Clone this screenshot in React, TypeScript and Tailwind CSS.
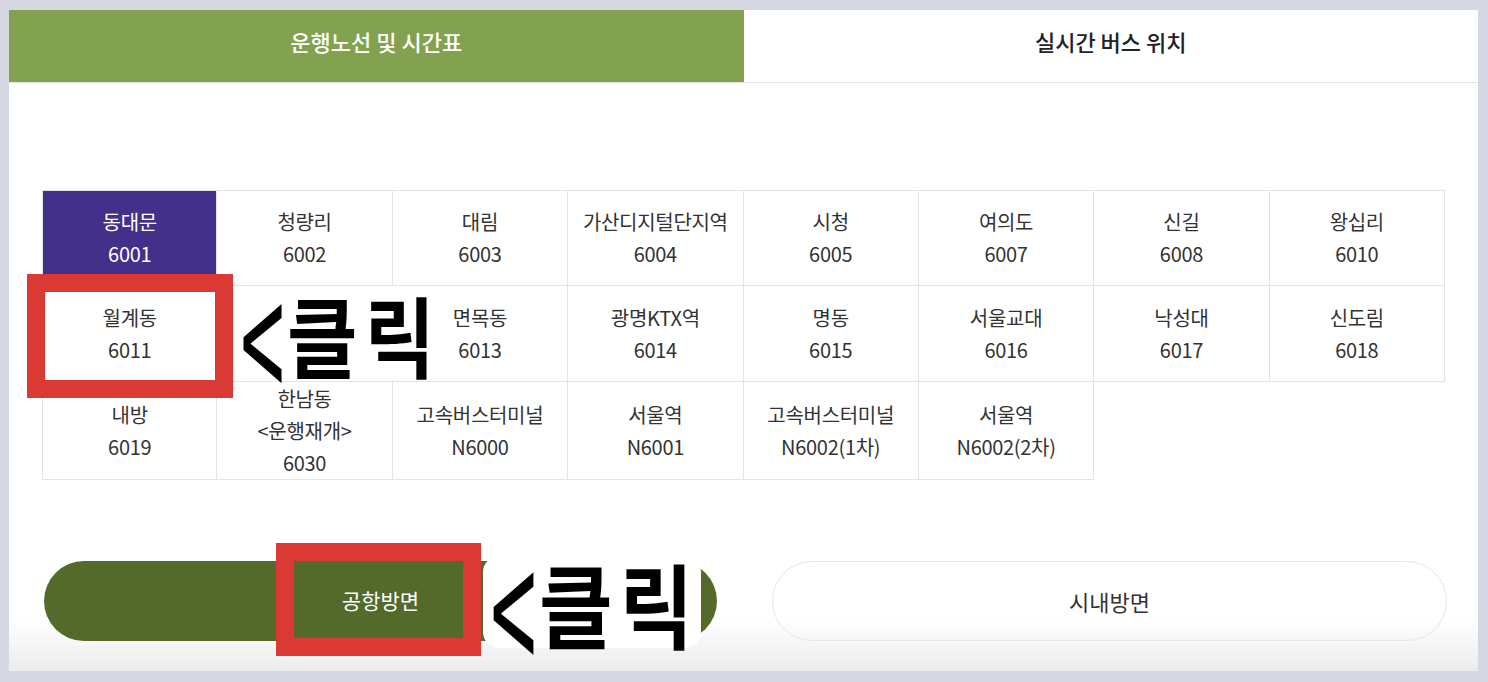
import React from "react";

const cells: string[][] = [
  ["동대문", "6001"],
  ["청량리", "6002"],
  ["대림", "6003"],
  ["가산디지털단지역", "6004"],
  ["시청", "6005"],
  ["여의도", "6007"],
  ["신길", "6008"],
  ["왕십리", "6010"],
  ["월계동", "6011"],
  ["", ""],
  ["면목동", "6013"],
  ["광명KTX역", "6014"],
  ["명동", "6015"],
  ["서울교대", "6016"],
  ["낙성대", "6017"],
  ["신도림", "6018"],
  ["내방", "6019"],
  ["한남동", "<운행재개>", "6030"],
  ["고속버스터미널", "N6000"],
  ["서울역", "N6001"],
  ["고속버스터미널", "N6002(1차)"],
  ["서울역", "N6002(2차)"],
];

function Click({ big }: { big?: boolean }) {
  return (
    <div
      className={
        "flex items-center font-bold text-black leading-none whitespace-nowrap " +
        (big ? "text-[92px]" : "text-[88px]")
      }
      style={{ fontFamily: '"Noto Sans CJK KR", "Noto Sans", sans-serif' }}
    >
      <span className="inline-block shrink-0 scale-y-[2.0] scale-x-[0.9] font-normal">&lt;</span>
      <span className="inline-block shrink-0 ml-[0px] scale-x-[0.87] origin-left tracking-[8px]">
        클릭
      </span>
    </div>
  );
}

export default function App() {
  return (
    <div
      className="relative w-[1488px] h-[682px] bg-[#d5d8e3] pt-[10px] pl-[9px] overflow-hidden"
      style={{ fontFamily: '"Noto Sans CJK KR", "Noto Sans", sans-serif' }}
    >
      <div className="w-[1469px] h-[661px] flex flex-col bg-linear-to-b from-white from-92% to-[#ececec]">
        {/* Tabs */}
        <div className="flex h-[73px] border-b border-[#e6e6e6]">
          <div className="flex-1 bg-[#82a24f] flex items-center justify-center pb-[10px] text-white text-[22px] font-medium">
            운행노선 및 시간표
          </div>
          <div className="flex-1 bg-white flex items-center justify-center pb-[10px] text-[#222] text-[22px] font-medium">
            실시간 버스 위치
          </div>
        </div>

        {/* Grid */}
        <div className="mt-[107px] ml-[33px] w-[1403px] grid grid-cols-8 grid-rows-[96px_96px_98px]">
          {cells.map((c, i) => {
            const col = i % 8;
            const row = Math.floor(i / 8);
            const active = i === 0;
            return (
              <div
                key={i}
                className={
                  "flex flex-col items-center justify-center text-[20px] leading-[32px] tracking-[-0.3px] border-r border-b border-[#e4e4e4] " +
                  (col === 0 ? "border-l " : "") +
                  (row === 0 ? "border-t " : "") +
                  (active ? "bg-[#42308a] text-white" : "bg-white text-[#333]")
                }
              >
                {c.map((t, j) => (
                  <span key={j}>{t}</span>
                ))}
              </div>
            );
          })}
        </div>

        {/* Buttons */}
        <div className="mt-[81px] pl-[35px] pr-[31px] flex gap-[55px]">
          <div className="flex-1 h-[80px] rounded-full bg-[#536a2b] flex items-center justify-center text-white text-[21px]">
            공항방면
          </div>
          <div className="flex-1 h-[80px] rounded-full border border-[#e6e6e6] flex items-center justify-center text-[#333] text-[22px]">
            시내방면
          </div>
        </div>
      </div>

      {/* Annotations */}
      <div className="absolute left-[27px] top-[274px] w-[206px] h-[124px] border-[18px] border-[#da3934]" />
      <div className="absolute left-[233px] top-[286px] w-[200px] h-[94px] bg-white rounded-[14px] flex items-center pl-[5px]">
        <Click />
      </div>
      <div className="absolute left-[276px] top-[543px] w-[205px] h-[113px] border-[18px] border-[#da3934]" />
      <div className="absolute left-[483px] top-[556px] w-[218px] h-[92px] bg-white rounded-[16px] flex items-center pl-[5px]">
        <Click big />
      </div>
    </div>
  );
}
